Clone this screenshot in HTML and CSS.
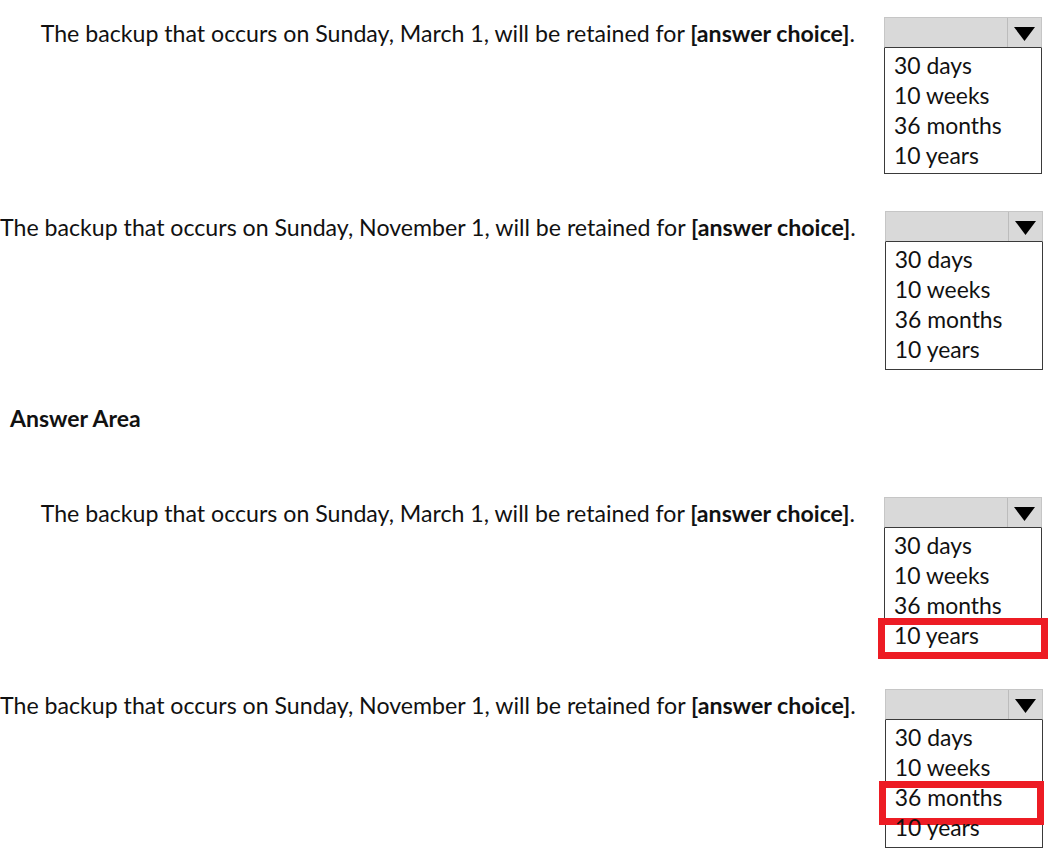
FILE: index.html
```html
<!DOCTYPE html>
<html lang="en">
<head>
<meta charset="utf-8">
<title>Answer Area</title>
<link rel="stylesheet" href="styles.css">
</head>
<body>
<main class="page">
  <section class="question q1">
    <p class="stmt">The backup that occurs on Sunday, March 1, will be retained for <b>[answer choice]</b>.</p>
    <div class="dd">
      <div class="dd-head"><span class="dd-value"></span><span class="dd-arrow"><svg width="21" height="14" viewBox="0 0 21 14"><path d="M0 0H21L10.5 14Z" fill="#000"/></svg></span></div>
      <ul class="dd-list">
        <li>30 days</li><li>10 weeks</li><li>36 months</li><li>10 years</li>
      </ul>
    </div>
  </section>
  <section class="question q2">
    <p class="stmt">The backup that occurs on Sunday, November 1, will be retained for <b>[answer choice]</b>.</p>
    <div class="dd">
      <div class="dd-head"><span class="dd-value"></span><span class="dd-arrow"><svg width="21" height="14" viewBox="0 0 21 14"><path d="M0 0H21L10.5 14Z" fill="#000"/></svg></span></div>
      <ul class="dd-list">
        <li>30 days</li><li>10 weeks</li><li>36 months</li><li>10 years</li>
      </ul>
    </div>
  </section>
  <h2 class="area">Answer Area</h2>
  <section class="question q3">
    <p class="stmt">The backup that occurs on Sunday, March 1, will be retained for <b>[answer choice]</b>.</p>
    <div class="dd">
      <div class="dd-head"><span class="dd-value"></span><span class="dd-arrow"><svg width="21" height="14" viewBox="0 0 21 14"><path d="M0 0H21L10.5 14Z" fill="#000"/></svg></span></div>
      <ul class="dd-list">
        <li>30 days</li><li>10 weeks</li><li>36 months</li><li class="picked picked-a">10 years</li>
      </ul>
    </div>
  </section>
  <section class="question q4">
    <p class="stmt">The backup that occurs on Sunday, November 1, will be retained for <b>[answer choice]</b>.</p>
    <div class="dd">
      <div class="dd-head"><span class="dd-value"></span><span class="dd-arrow"><svg width="21" height="14" viewBox="0 0 21 14"><path d="M0 0H21L10.5 14Z" fill="#000"/></svg></span></div>
      <ul class="dd-list">
        <li>30 days</li><li>10 weeks</li><li class="picked picked-b">36 months</li><li>10 years</li>
      </ul>
    </div>
  </section>
</main>
</body>
</html>
```
FILE: styles.css
```css
* { box-sizing: border-box; }
html, body { margin: 0; padding: 0; background: #fff; }
body {
  font-family: Lato, "Open Sans", "Liberation Sans", sans-serif;
  color: #111;
}
.page {
  width: 1063px;
  padding-top: 17px;
  display: flex;
  flex-direction: column;
}
.question {
  display: flex;
  align-items: flex-start;
}
.q2 { margin-top: 37px; }
.q4 { margin-top: 35px; }
.stmt {
  flex: 0 0 855px;
  margin: 0;
  text-align: right;
  white-space: nowrap;
  font-size: 23.15px;
  line-height: 31px;
  padding-top: 1px;
}
.stmt b { font-weight: 700; }
.area {
  margin: 36px 0 0 10px;
  font-size: 23px;
  font-weight: 700;
  line-height: 24px;
  height: 24px;
}
.q3 { margin-top: 67px; }
.dd {
  flex: 0 0 158px;
  margin-left: 29px;
  width: 158px;
}
.dd-head {
  display: flex;
  height: 31px;
  background: #d9d9d9;
  border: 1px solid #c6c6c6;
  border-bottom: 1px solid #3a3a3a;
}
.dd-value { flex: 1; }
.dd-arrow {
  width: 34px;
  border-left: 1px solid #bcbcbc;
  display: flex;
  align-items: center;
  justify-content: center;
  padding-top: 2px;
}
.dd-arrow svg { display: block; }
.dd-list {
  list-style: none;
  margin: 0;
  padding: 2px 0 3px 9px;
  border: 1px solid #3a3a3a;
  border-top: none;
  font-size: 22.9px;
  line-height: 30px;
}
.q2 .dd-list, .q4 .dd-list { padding-bottom: 5px; }
.dd-list li { position: relative; white-space: nowrap; }
.picked::after {
  content: "";
  position: absolute;
  border: 7px solid #ed1c24;
  pointer-events: none;
}
.picked-a::after { left: -16px; right: -7px; top: -2px; bottom: -9px; }
.picked-b::after { left: -16px; right: -2px; top: -1px; bottom: -13px; }
```
